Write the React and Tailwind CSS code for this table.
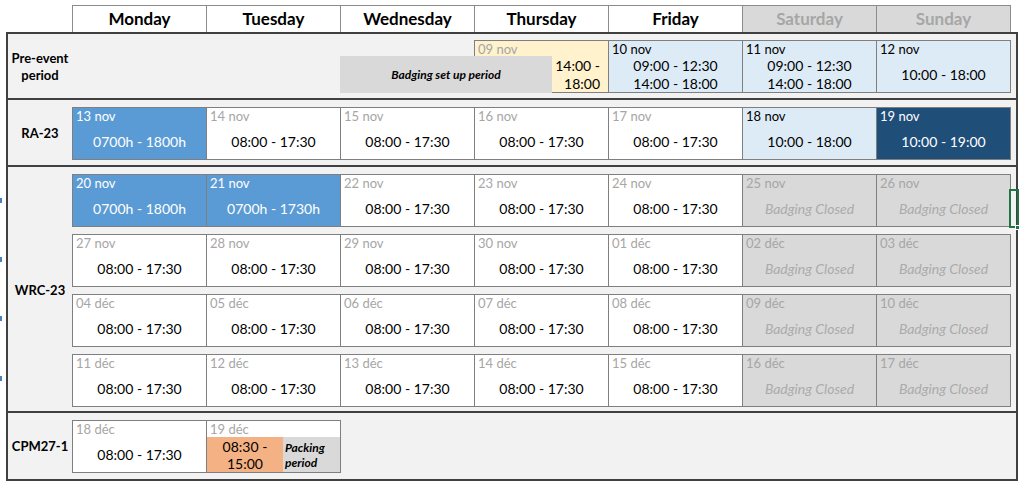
import React from "react";

const DAYS = ["Monday", "Tuesday", "Wednesday", "Thursday", "Friday", "Saturday", "Sunday"];

const V = {
  normal: { bg: "bg-white", date: "text-[#a6a6a6]", time: "text-black" },
  closed: { bg: "bg-[#d9d9d9]", date: "text-[#a6a6a6]", time: "text-[#ababab] italic" },
  light: { bg: "bg-[#ddebf7]", date: "text-black", time: "text-black" },
  blue: { bg: "bg-[#5b9bd5]", date: "text-white", time: "text-white" },
  navy: { bg: "bg-[#1f4e79]", date: "text-white", time: "text-white" },
};

function Cell({ date, variant = "normal", first = false, children }) {
  const v = V[variant];
  return (
    <div
      className={`w-[135px] h-[53px] shrink-0 border border-[#7f7f7f] flex flex-col ${first ? "" : "-ml-px"} ${v.bg}`}
    >
      <div className={`h-[16px] leading-[16px] pl-[3px] text-[13px] ${v.date}`}>{date}</div>
      <div className={`flex-1 flex flex-col items-center justify-center text-[14px] leading-[18px] ${v.time}`}>
        {children}
      </div>
    </div>
  );
}

function Week({ cells }) {
  return (
    <div className="flex">
      {cells.map((c, i) => (
        <Cell key={i} date={c[0]} variant={c[1]} first={i === 0}>
          {c[1] === "closed" ? "Badging Closed" : c[2] || "08:00 - 17:30"}
        </Cell>
      ))}
    </div>
  );
}

function Label({ children }) {
  return (
    <div className="w-[64px] shrink-0 flex items-center justify-center text-center text-[13px] leading-[17px] font-bold text-black">
      {children}
    </div>
  );
}

export default function App() {
  return (
    <div className="relative w-[1024px] h-[484px] bg-white overflow-hidden font-['Lato',sans-serif] text-black">
      {/* header */}
      <div className="flex pt-[5px] pl-[72px]">
        {DAYS.map((d, i) => (
          <div
            key={d}
            className={`w-[135px] h-[27px] shrink-0 border-x border-t border-[#8c8c8c] flex items-center justify-center text-[17px] font-bold ${
              i > 0 ? "-ml-px" : ""
            } ${i >= 5 ? "bg-[#d9d9d9] text-[#a6a6a6]" : "bg-white text-black"}`}
          >
            {d}
          </div>
        ))}
      </div>

      {/* sections */}
      <div className="ml-[6px] w-[1012px] border-2 border-[#404040] bg-[#f2f2f2]">
        {/* Pre-event */}
        <div className="flex border-b-2 border-[#404040] pt-[6px] pb-[5px]">
          <Label>
            Pre-event
            <br />
            period
          </Label>
          <div className="flex">
            <div className="w-[268px] shrink-0" />
            <div className="relative flex">
              <div className="w-[134px] shrink-0" />
              <div className="w-[135px] h-[53px] shrink-0 border border-[#7f7f7f] bg-[#fff2cc] flex flex-col">
                <div className="h-[16px] leading-[16px] pl-[3px] text-[13px] text-[#a6a6a6]">09 nov</div>
                <div className="flex-1 flex">
                  <div className="w-[77px]" />
                  <div className="flex-1 flex flex-col items-end justify-center pr-[8px] text-[14px] leading-[18px]">
                    <span>14:00 -</span>
                    <span>18:00</span>
                  </div>
                </div>
              </div>
              <div className="absolute left-0 top-[16px] w-[212px] h-[37px] bg-[#d9d9d9] flex items-center justify-center text-[12px] font-bold italic">
                Badging set up period
              </div>
            </div>
            <Cell date="10 nov" variant="light">
              <span>09:00 - 12:30</span>
              <span>14:00 - 18:00</span>
            </Cell>
            <Cell date="11 nov" variant="light">
              <span>09:00 - 12:30</span>
              <span>14:00 - 18:00</span>
            </Cell>
            <Cell date="12 nov" variant="light">
              10:00 - 18:00
            </Cell>
          </div>
        </div>

        {/* RA-23 */}
        <div className="flex border-b-2 border-[#404040] pt-[7px] pb-[5px]">
          <Label>RA-23</Label>
          <Week
            cells={[
              ["13 nov", "blue", "0700h - 1800h"],
              ["14 nov", "normal"],
              ["15 nov", "normal"],
              ["16 nov", "normal"],
              ["17 nov", "normal"],
              ["18 nov", "light", "10:00 - 18:00"],
              ["19 nov", "navy", "10:00 - 19:00"],
            ]}
          />
        </div>

        {/* WRC-23 */}
        <div className="flex border-b-2 border-[#404040] pt-[7px] pb-[4px]">
          <Label>WRC-23</Label>
          <div className="flex flex-col gap-[7px]">
            <Week
              cells={[
                ["20 nov", "blue", "0700h - 1800h"],
                ["21 nov", "blue", "0700h - 1730h"],
                ["22 nov", "normal"],
                ["23 nov", "normal"],
                ["24 nov", "normal"],
                ["25 nov", "closed"],
                ["26 nov", "closed"],
              ]}
            />
            <Week
              cells={[
                ["27 nov", "normal"],
                ["28 nov", "normal"],
                ["29 nov", "normal"],
                ["30 nov", "normal"],
                ["01 déc", "normal"],
                ["02 déc", "closed"],
                ["03 déc", "closed"],
              ]}
            />
            <Week
              cells={[
                ["04 déc", "normal"],
                ["05 déc", "normal"],
                ["06 déc", "normal"],
                ["07 déc", "normal"],
                ["08 déc", "normal"],
                ["09 déc", "closed"],
                ["10 déc", "closed"],
              ]}
            />
            <Week
              cells={[
                ["11 déc", "normal"],
                ["12 déc", "normal"],
                ["13 déc", "normal"],
                ["14 déc", "normal"],
                ["15 déc", "normal"],
                ["16 déc", "closed"],
                ["17 déc", "closed"],
              ]}
            />
          </div>
        </div>

        {/* CPM27-1 */}
        <div className="flex pt-[7px] pb-[6px]">
          <Label>CPM27-1</Label>
          <div className="flex">
            <Cell date="18 déc" first>
              08:00 - 17:30
            </Cell>
            <div className="w-[135px] h-[53px] shrink-0 -ml-px border border-[#7f7f7f] bg-white flex flex-col">
              <div className="h-[16px] leading-[16px] pl-[3px] text-[13px] text-[#a6a6a6]">19 déc</div>
              <div className="flex-1 flex">
                <div className="w-[76px] bg-[#f4b183] flex flex-col items-center justify-center text-[14px] leading-[17px]">
                  <span>08:30 -</span>
                  <span>15:00</span>
                </div>
                <div className="flex-1 bg-[#d9d9d9] flex flex-col justify-center pl-[2px] text-[12px] leading-[15px] font-bold italic">
                  <span>Packing</span>
                  <span>period</span>
                </div>
              </div>
            </div>
          </div>
        </div>
      </div>

      {/* clipped glyph fragments at left edge */}
      <span className="absolute left-0 top-[198px] w-[2px] h-[5px] bg-[#4a7fc1]" />
      <span className="absolute left-0 top-[257px] w-[2px] h-[5px] bg-[#4a7fc1]" />
      <span className="absolute left-0 top-[316px] w-[2px] h-[5px] bg-[#4a7fc1]" />
      <span className="absolute left-0 top-[376px] w-[2px] h-[5px] bg-[#4a7fc1]" />

      {/* spreadsheet selection marker */}
      <div className="absolute left-[1009px] top-[189px] w-[10px] h-[39px] border-2 border-[#217346]" />
      <div className="absolute left-[1015px] top-[225px] w-[5px] h-[5px] bg-[#217346] border border-white" />
    </div>
  );
}
